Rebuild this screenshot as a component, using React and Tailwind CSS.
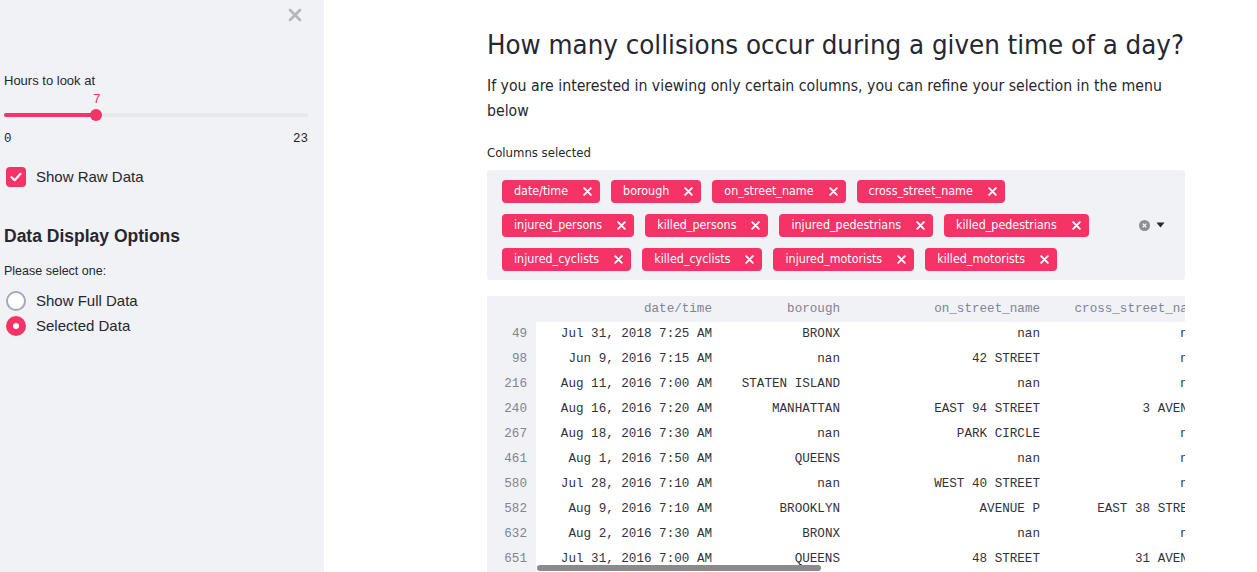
import React from 'react'

const rows = [
  ['49', 'Jul 31, 2018 7:25 AM', 'BRONX', 'nan', 'nan'],
  ['98', 'Jun 9, 2016 7:15 AM', 'nan', '42 STREET', 'nan'],
  ['216', 'Aug 11, 2016 7:00 AM', 'STATEN ISLAND', 'nan', 'nan'],
  ['240', 'Aug 16, 2016 7:20 AM', 'MANHATTAN', 'EAST 94 STREET', '3 AVENUE'],
  ['267', 'Aug 18, 2016 7:30 AM', 'nan', 'PARK CIRCLE', 'nan'],
  ['461', 'Aug 1, 2016 7:50 AM', 'QUEENS', 'nan', 'nan'],
  ['580', 'Jul 28, 2016 7:10 AM', 'nan', 'WEST 40 STREET', 'nan'],
  ['582', 'Aug 9, 2016 7:10 AM', 'BROOKLYN', 'AVENUE P', 'EAST 38 STREET'],
  ['632', 'Aug 2, 2016 7:30 AM', 'BRONX', 'nan', 'nan'],
  ['651', 'Jul 31, 2016 7:00 AM', 'QUEENS', '48 STREET', '31 AVENUE'],
]

const tagRows = [
  ['date/time', 'borough', 'on_street_name', 'cross_street_name'],
  ['injured_persons', 'killed_persons', 'injured_pedestrians', 'killed_pedestrians'],
  ['injured_cyclists', 'killed_cyclists', 'injured_motorists', 'killed_motorists'],
]

const Tag = ({ label }) => (
  <div className="flex items-center h-[23px] rounded-[4px] bg-[#f63366] text-white text-[12.4px] pl-3 pr-[8px]">
    <span>{label}</span>
    <svg className="ml-[15px]" width="9" height="9" viewBox="0 0 9 9">
      <path d="M1.2 1.2 L7.8 7.8 M7.8 1.2 L1.2 7.8" stroke="white" strokeWidth="1.9" strokeLinecap="round" />
    </svg>
  </div>
)

export default function App() {
  return (
    <div className="flex w-[1257px] h-[572px] overflow-hidden bg-white text-[#262730]" style={{ fontFamily: '"DejaVu Sans Condensed", Roboto, "Liberation Sans", sans-serif' }}>
      {/* sidebar */}
      <div className="w-[324px] shrink-0 bg-[#f0f2f6] relative px-1 pt-[73px]" style={{ fontFamily: '"Liberation Sans", sans-serif' }}>
        <svg className="absolute left-[288px] top-[8px]" width="14" height="14" viewBox="0 0 14 14">
          <path d="M2 2 L12 12 M12 2 L2 12" stroke="#b4b6bb" strokeWidth="2.6" strokeLinecap="round" />
        </svg>
        <div className="text-[13px] leading-[16px]">Hours to look at</div>
        <div className="relative h-[40px] w-[304px]">
          <div className="absolute left-[89px] top-[1px] text-[13px] text-[#f63366]" style={{ fontFamily: '"Liberation Mono", monospace' }}>7</div>
          <div className="absolute left-0 right-0 top-[24px] h-[4px] rounded-full bg-[#e6e8ec]" />
          <div className="absolute left-0 w-[92px] top-[24px] h-[4px] rounded-full bg-[#f63366]" />
          <div className="absolute left-[86px] top-[20px] w-[12px] h-[12px] rounded-full bg-[#f63366]" />
        </div>
        <div className="flex justify-between w-[304px] text-[12.5px] mt-[1px]" style={{ fontFamily: '"Liberation Mono", monospace' }}>
          <span>0</span>
          <span>23</span>
        </div>
        <div className="flex items-center mt-[17px] ml-[2px]">
          <div className="w-[20px] h-[20px] rounded-[4px] bg-[#f63366] flex items-center justify-center">
            <svg width="14" height="14" viewBox="0 0 14 14">
              <path d="M2.5 7.2 L5.7 10.2 L11.5 3.8" stroke="white" strokeWidth="2.2" fill="none" strokeLinecap="round" strokeLinejoin="round" />
            </svg>
          </div>
          <span className="ml-[10px] text-[15px]">Show Raw Data</span>
        </div>
        <div className="mt-[35px] text-[17.5px] font-bold">Data Display Options</div>
        <div className="mt-[12px] text-[12.5px]">Please select one:</div>
        <div className="mt-[8px] flex items-center ml-[2px] h-[25px]">
          <div className="w-[20px] h-[20px] rounded-full border-2 border-[#a3a8b4] bg-white" />
          <span className="ml-[10px] text-[15px]">Show Full Data</span>
        </div>
        <div className="flex items-center ml-[2px] h-[25px]">
          <div className="w-[20px] h-[20px] rounded-full bg-[#f63366] flex items-center justify-center">
            <div className="w-[6px] h-[6px] rounded-full bg-white" />
          </div>
          <span className="ml-[10px] text-[15px]">Selected Data</span>
        </div>
      </div>

      {/* main */}
      <div className="flex-1 pl-[163px] pt-[26px]">
        <div className="w-[698px]">
          <h1 className="text-[27.4px] leading-[38px] font-normal whitespace-nowrap">How many collisions occur during a given time of a day?</h1>
          <p className="mt-[9px] text-[15.7px] leading-[25px]">If you are interested in viewing only certain columns, you can refine your selection in the menu below</p>
          <div className="mt-[22px] text-[13px] leading-[16px]">Columns selected</div>
          <div className="mt-[9px] h-[110px] rounded-[4px] bg-[#f0f2f6] flex items-center pl-[15px] pr-[20px]">
            <div className="flex-1 flex flex-col gap-[11px]">
              {tagRows.map((r, i) => (
                <div key={i} className="flex gap-[11px]">
                  {r.map(t => <Tag key={t} label={t} />)}
                </div>
              ))}
            </div>
            <div className="flex items-center gap-[6px]">
              <svg width="11" height="11" viewBox="0 0 11 11">
                <circle cx="5.5" cy="5.5" r="5.5" fill="#8c8f96" />
                <path d="M3.7 3.7 L7.3 7.3 M7.3 3.7 L3.7 7.3" stroke="white" strokeWidth="1.2" />
              </svg>
              <svg width="9" height="6" viewBox="0 0 9 6">
                <path d="M0.5 0.5 L8.5 0.5 L4.5 5.5 Z" fill="#262730" />
              </svg>
            </div>
          </div>

          <div className="mt-[16px] overflow-hidden relative text-[12.6px] text-[#31333b]" style={{ fontFamily: '"Liberation Mono", monospace' }}>
            <div className="flex h-[26px] items-center bg-[#f0f2f6] text-[#808495]">
              <div className="w-[49px] shrink-0" />
              <div className="w-[186px] shrink-0 text-right pr-[10px]">date/time</div>
              <div className="w-[128px] shrink-0 text-right pr-[10px]">borough</div>
              <div className="w-[200px] shrink-0 text-right pr-[10px]">on_street_name</div>
              <div className="w-[153px] shrink-0 text-right whitespace-nowrap">cross_street_name</div>
            </div>
            {rows.map(r => (
              <div key={r[0]} className="flex h-[25px] items-center">
                <div className="w-[49px] shrink-0 self-stretch flex items-center justify-end pr-[9px] bg-[#f0f2f6] text-[#808495]">{r[0]}</div>
                <div className="w-[186px] shrink-0 text-right pr-[10px] whitespace-nowrap">{r[1]}</div>
                <div className="w-[128px] shrink-0 text-right pr-[10px] whitespace-nowrap">{r[2]}</div>
                <div className="w-[200px] shrink-0 text-right pr-[10px] whitespace-nowrap">{r[3]}</div>
                <div className="w-[153px] shrink-0 text-right whitespace-nowrap">{r[4]}</div>
              </div>
            ))}
            <div className="absolute left-[50px] top-[269px] w-[284px] h-[6px] rounded-full bg-[#8a8a8a]" />
          </div>
        </div>
      </div>
    </div>
  )
}
